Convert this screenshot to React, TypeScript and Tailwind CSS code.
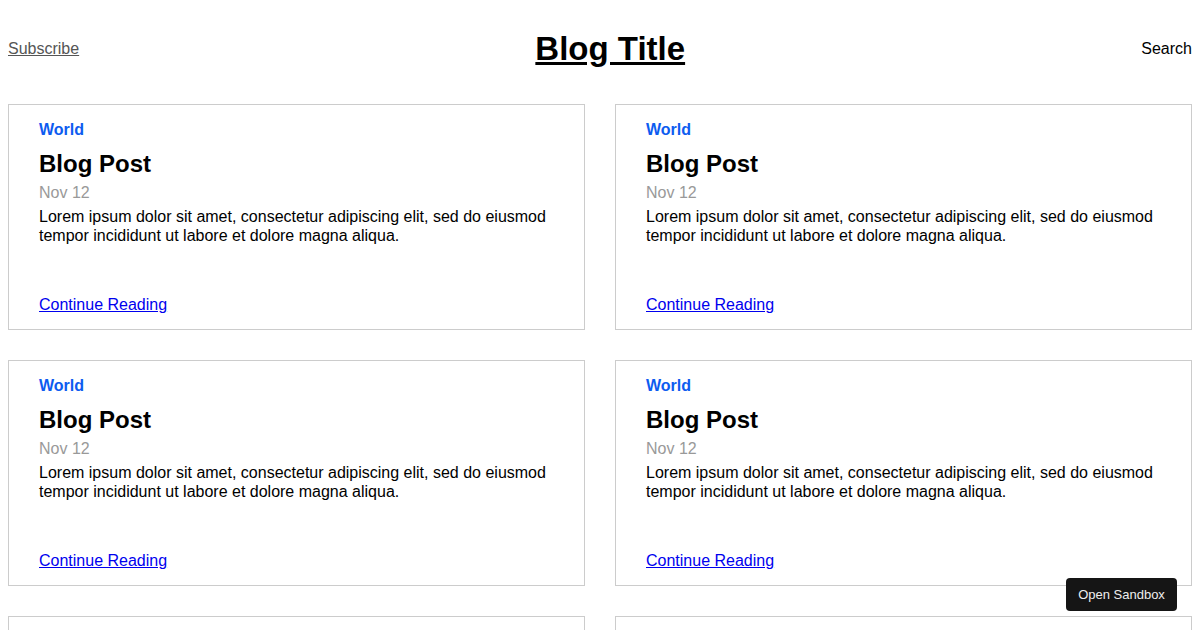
const posts = Array.from({ length: 6 }, (_, i) => ({
  id: i,
  category: 'World',
  title: 'Blog Post',
  date: 'Nov 12',
  excerpt:
    'Lorem ipsum dolor sit amet, consectetur adipiscing elit, sed do eiusmod tempor incididunt ut labore et dolore magna aliqua.',
}));

function PostCard({ post }: { post: (typeof posts)[number] }) {
  return (
    <div className="h-[226px] border border-[#cccccc] pl-[30px] pr-6 pt-[16px] pb-[15px] flex flex-col">
      <a href="#" className="text-[16px] leading-[18px] font-bold text-[#0d5cf0]">
        {post.category}
      </a>
      <h2 className="mt-[11px] text-[24px] leading-[28px] font-bold text-black">{post.title}</h2>
      <p className="mt-[6px] text-[16px] leading-[18px] text-[#999999]">{post.date}</p>
      <p className="mt-[5px] text-[16px] leading-[19px] text-black">{post.excerpt}</p>
      <a href="#" className="mt-auto text-[16px] leading-[18px] text-[#0000ee] underline">
        Continue Reading
      </a>
    </div>
  );
}

export default function App() {
  return (
    <div className="min-h-screen bg-white px-2 font-['Liberation_Sans',Arial,sans-serif]">
      <header className="h-[98px] pb-[1px] flex items-center justify-between">
        <a href="#" className="text-[16px] text-[#555555] underline">
          Subscribe
        </a>
        <h1 className="text-[33px] font-bold text-black underline">Blog Title</h1>
        <div className="text-[16px] text-black">Search</div>
      </header>

      <div className="mt-[6px] grid grid-cols-2 gap-[30px]">
        {posts.map((post) => (
          <PostCard key={post.id} post={post} />
        ))}
      </div>

      <button className="fixed right-[23px] bottom-[19px] w-[111px] h-[33px] rounded-[4px] bg-[#151515] text-[13px] text-[#eeeeee] text-center font-['Liberation_Sans',Arial,sans-serif]">
        Open Sandbox
      </button>
    </div>
  );
}
